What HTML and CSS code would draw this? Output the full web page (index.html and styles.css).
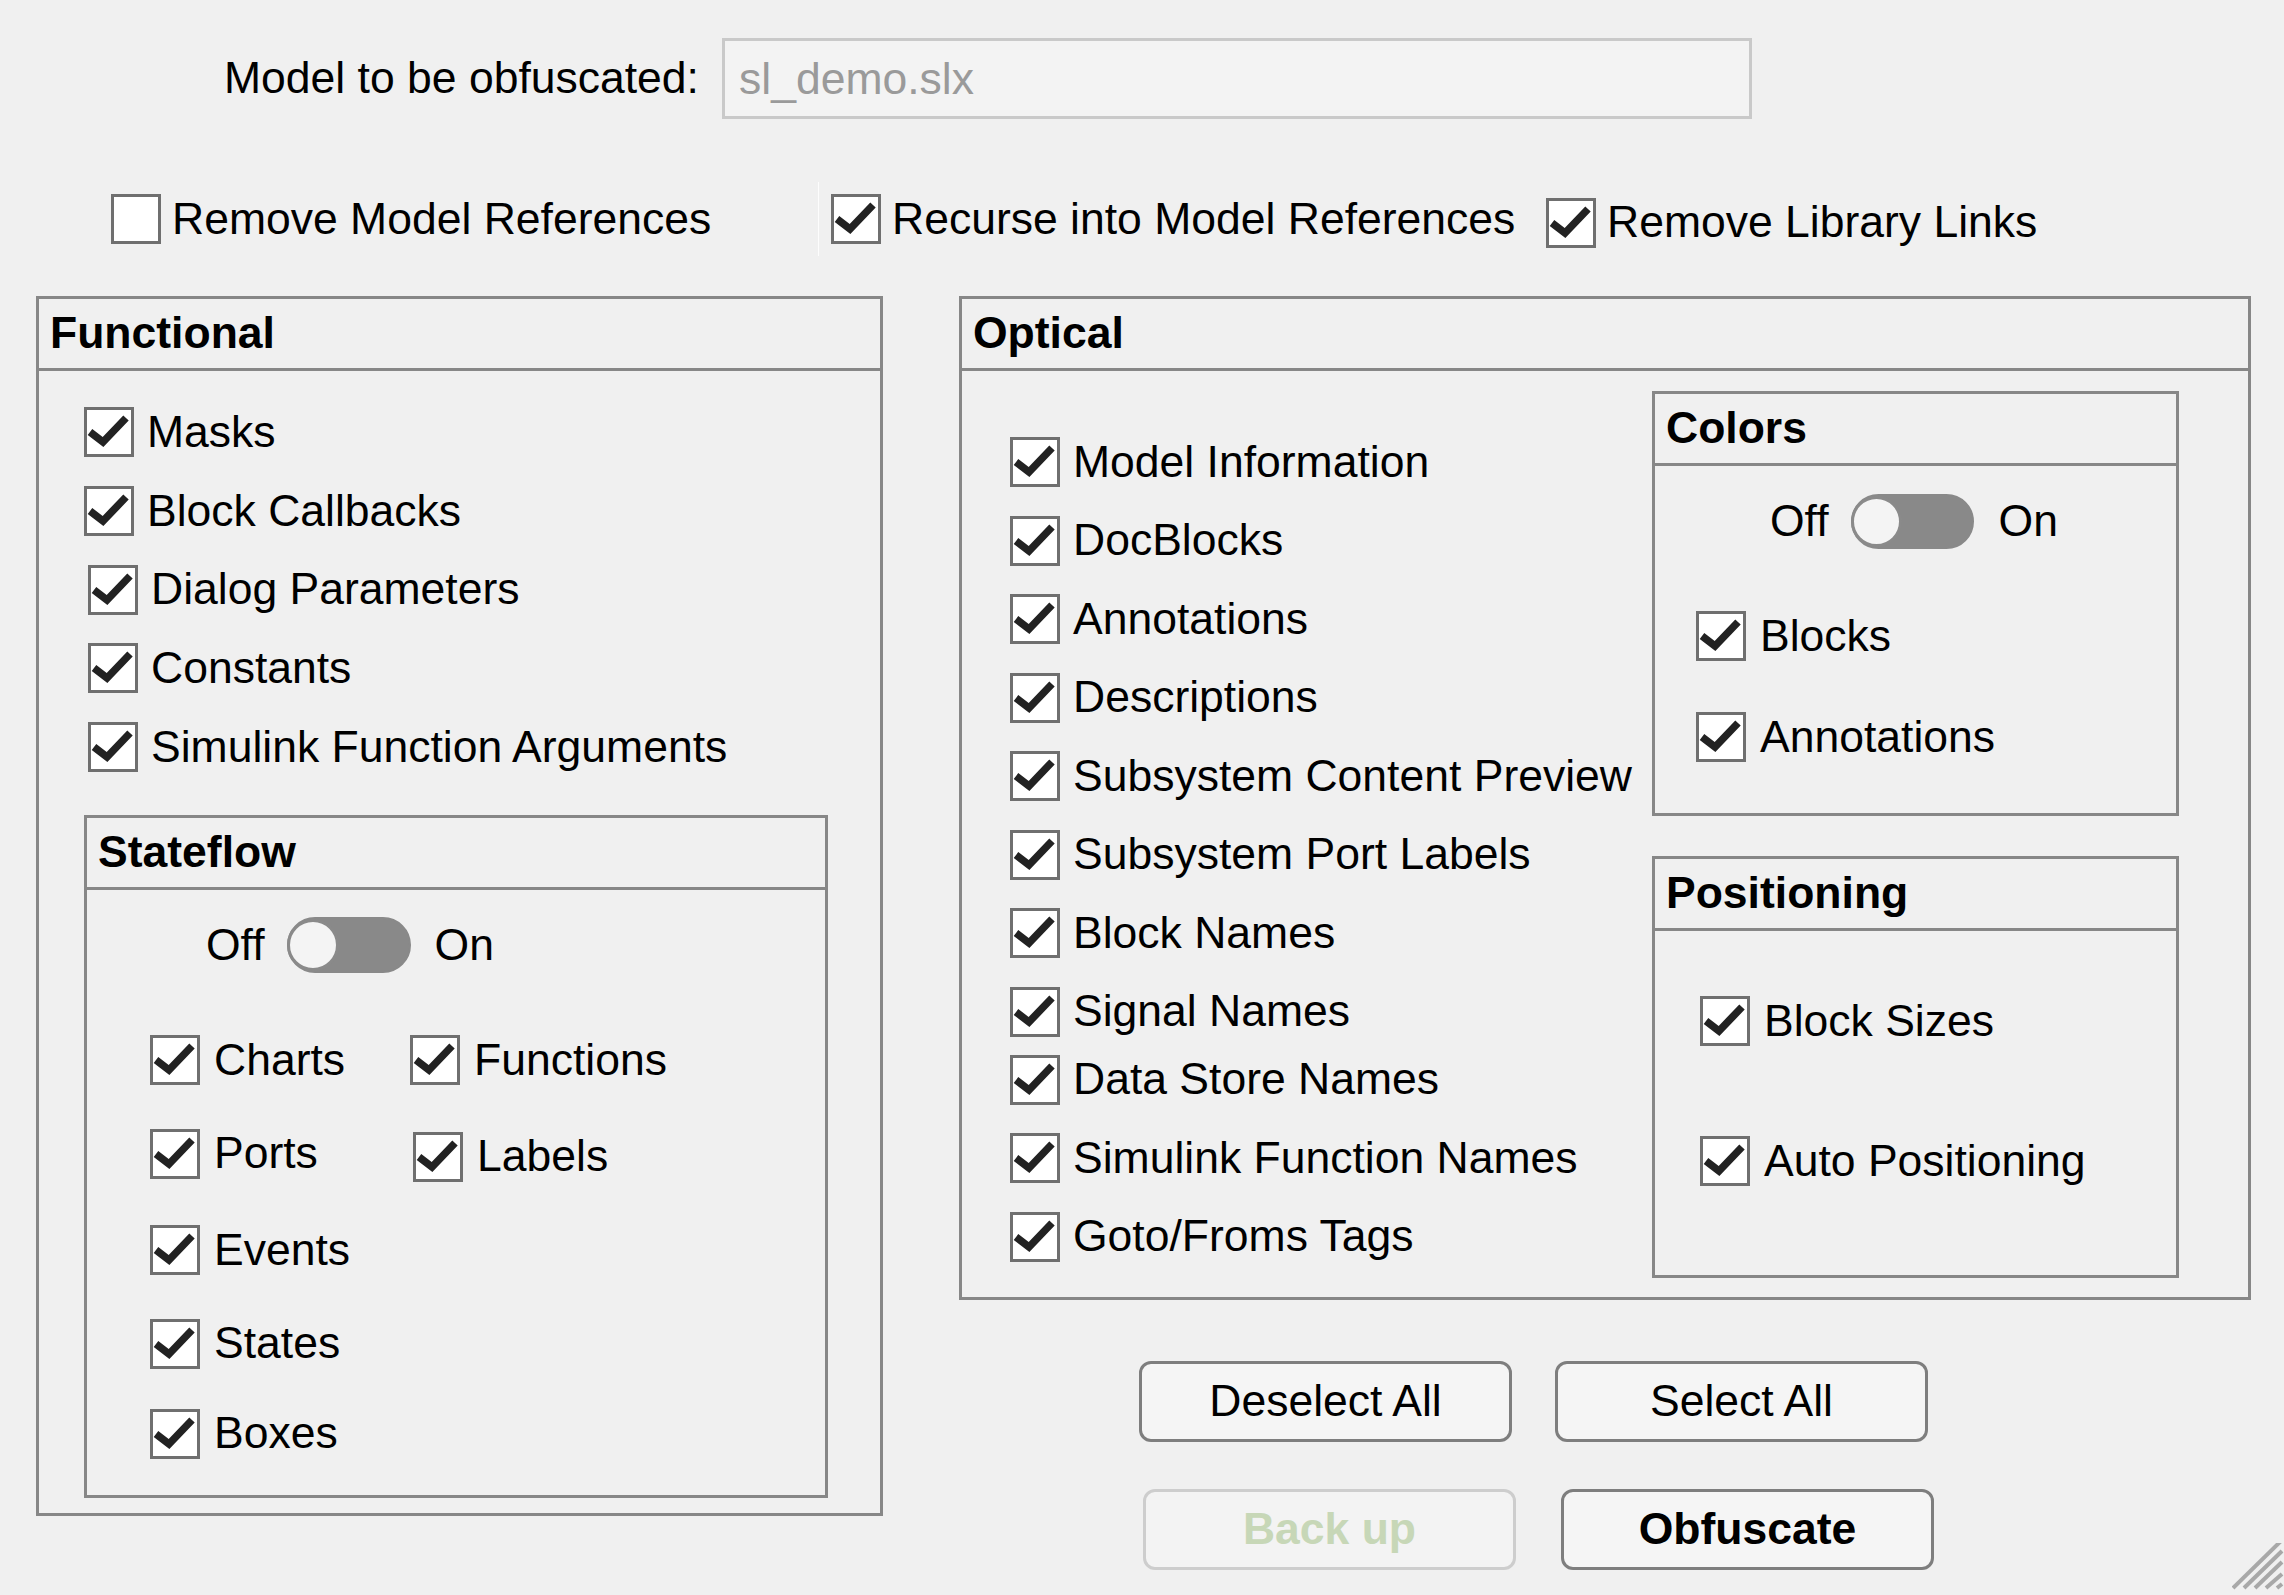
FILE: index.html
```html
<!DOCTYPE html>
<html lang="en">
<head>
<meta charset="utf-8">
<title>Model Obfuscator</title>
<link rel="stylesheet" href="styles.css">
</head>
<body>
<div class="app">
  <div class="model-row">
    <label class="model-label">Model to be obfuscated:</label>
    <div class="model-field">sl_demo.slx</div>
  </div>

  <div class="opt-row">
    <div class="cb opt1"><span class="box"></span><span class="lbl">Remove Model References</span></div>
    <div class="sep"></div>
    <div class="cb opt2"><span class="box"><svg class="tick" viewBox="0 0 44 44"><path d="M3 22 L16 32 L39 8"/></svg></span><span class="lbl">Recurse into Model References</span></div>
    <div class="cb opt3"><span class="box"><svg class="tick" viewBox="0 0 44 44"><path d="M3 22 L16 32 L39 8"/></svg></span><span class="lbl">Remove Library Links</span></div>
  </div>

  <div class="main">
    <section class="panel functional">
      <h2 class="panel-title">Functional</h2>
      <div class="panel-body func-body">
        <div class="cb-list func-list">
          <div class="cb"><span class="box"><svg class="tick" viewBox="0 0 44 44"><path d="M3 22 L16 32 L39 8"/></svg></span><span class="lbl">Masks</span></div>
          <div class="cb"><span class="box"><svg class="tick" viewBox="0 0 44 44"><path d="M3 22 L16 32 L39 8"/></svg></span><span class="lbl">Block Callbacks</span></div>
          <div class="cb shift"><span class="box"><svg class="tick" viewBox="0 0 44 44"><path d="M3 22 L16 32 L39 8"/></svg></span><span class="lbl">Dialog Parameters</span></div>
          <div class="cb shift"><span class="box"><svg class="tick" viewBox="0 0 44 44"><path d="M3 22 L16 32 L39 8"/></svg></span><span class="lbl">Constants</span></div>
          <div class="cb shift"><span class="box"><svg class="tick" viewBox="0 0 44 44"><path d="M3 22 L16 32 L39 8"/></svg></span><span class="lbl">Simulink Function Arguments</span></div>
        </div>

        <section class="panel stateflow">
          <h2 class="panel-title">Stateflow</h2>
          <div class="panel-body sf-body">
            <div class="toggle-row sf-toggle">
              <span class="tog-lbl">Off</span>
              <span class="switch"><span class="knob"></span></span>
              <span class="tog-lbl">On</span>
            </div>
            <div class="sf-grid">
              <div class="sf-row">
                <div class="cb sf-col1"><span class="box"><svg class="tick" viewBox="0 0 44 44"><path d="M3 22 L16 32 L39 8"/></svg></span><span class="lbl">Charts</span></div>
                <div class="cb"><span class="box"><svg class="tick" viewBox="0 0 44 44"><path d="M3 22 L16 32 L39 8"/></svg></span><span class="lbl">Functions</span></div>
              </div>
              <div class="sf-row">
                <div class="cb sf-col1"><span class="box"><svg class="tick" viewBox="0 0 44 44"><path d="M3 22 L16 32 L39 8"/></svg></span><span class="lbl">Ports</span></div>
                <div class="cb labels-cb"><span class="box"><svg class="tick" viewBox="0 0 44 44"><path d="M3 22 L16 32 L39 8"/></svg></span><span class="lbl">Labels</span></div>
              </div>
              <div class="sf-row">
                <div class="cb sf-col1"><span class="box"><svg class="tick" viewBox="0 0 44 44"><path d="M3 22 L16 32 L39 8"/></svg></span><span class="lbl">Events</span></div>
              </div>
              <div class="sf-row">
                <div class="cb sf-col1"><span class="box"><svg class="tick" viewBox="0 0 44 44"><path d="M3 22 L16 32 L39 8"/></svg></span><span class="lbl">States</span></div>
              </div>
              <div class="sf-row sf-last">
                <div class="cb sf-col1"><span class="box"><svg class="tick" viewBox="0 0 44 44"><path d="M3 22 L16 32 L39 8"/></svg></span><span class="lbl">Boxes</span></div>
              </div>
            </div>
          </div>
        </section>
      </div>
    </section>

    <div class="right-col">
      <section class="panel optical">
        <h2 class="panel-title">Optical</h2>
        <div class="panel-body opt-body">
          <div class="cb-list optical-list">
            <div class="cb"><span class="box"><svg class="tick" viewBox="0 0 44 44"><path d="M3 22 L16 32 L39 8"/></svg></span><span class="lbl">Model Information</span></div>
            <div class="cb"><span class="box"><svg class="tick" viewBox="0 0 44 44"><path d="M3 22 L16 32 L39 8"/></svg></span><span class="lbl">DocBlocks</span></div>
            <div class="cb"><span class="box"><svg class="tick" viewBox="0 0 44 44"><path d="M3 22 L16 32 L39 8"/></svg></span><span class="lbl">Annotations</span></div>
            <div class="cb"><span class="box"><svg class="tick" viewBox="0 0 44 44"><path d="M3 22 L16 32 L39 8"/></svg></span><span class="lbl">Descriptions</span></div>
            <div class="cb"><span class="box"><svg class="tick" viewBox="0 0 44 44"><path d="M3 22 L16 32 L39 8"/></svg></span><span class="lbl">Subsystem Content Preview</span></div>
            <div class="cb"><span class="box"><svg class="tick" viewBox="0 0 44 44"><path d="M3 22 L16 32 L39 8"/></svg></span><span class="lbl">Subsystem Port Labels</span></div>
            <div class="cb"><span class="box"><svg class="tick" viewBox="0 0 44 44"><path d="M3 22 L16 32 L39 8"/></svg></span><span class="lbl">Block Names</span></div>
            <div class="cb"><span class="box"><svg class="tick" viewBox="0 0 44 44"><path d="M3 22 L16 32 L39 8"/></svg></span><span class="lbl">Signal Names</span></div>
            <div class="cb tight"><span class="box"><svg class="tick" viewBox="0 0 44 44"><path d="M3 22 L16 32 L39 8"/></svg></span><span class="lbl">Data Store Names</span></div>
            <div class="cb"><span class="box"><svg class="tick" viewBox="0 0 44 44"><path d="M3 22 L16 32 L39 8"/></svg></span><span class="lbl">Simulink Function Names</span></div>
            <div class="cb"><span class="box"><svg class="tick" viewBox="0 0 44 44"><path d="M3 22 L16 32 L39 8"/></svg></span><span class="lbl">Goto/Froms Tags</span></div>
          </div>

          <div class="sub-col">
            <section class="panel colors">
              <h2 class="panel-title">Colors</h2>
              <div class="panel-body colors-body">
                <div class="toggle-row col-toggle">
                  <span class="tog-lbl">Off</span>
                  <span class="switch"><span class="knob"></span></span>
                  <span class="tog-lbl">On</span>
                </div>
                <div class="cb colors-cb1"><span class="box"><svg class="tick" viewBox="0 0 44 44"><path d="M3 22 L16 32 L39 8"/></svg></span><span class="lbl">Blocks</span></div>
                <div class="cb colors-cb2"><span class="box"><svg class="tick" viewBox="0 0 44 44"><path d="M3 22 L16 32 L39 8"/></svg></span><span class="lbl">Annotations</span></div>
              </div>
            </section>

            <section class="panel positioning">
              <h2 class="panel-title">Positioning</h2>
              <div class="panel-body pos-body">
                <div class="cb pos-cb1"><span class="box"><svg class="tick" viewBox="0 0 44 44"><path d="M3 22 L16 32 L39 8"/></svg></span><span class="lbl">Block Sizes</span></div>
                <div class="cb pos-cb2"><span class="box"><svg class="tick" viewBox="0 0 44 44"><path d="M3 22 L16 32 L39 8"/></svg></span><span class="lbl">Auto Positioning</span></div>
              </div>
            </section>
          </div>
        </div>
      </section>

      <div class="buttons">
        <div class="btn-row">
          <button class="btn">Deselect All</button>
          <button class="btn">Select All</button>
        </div>
        <div class="btn-row btn-row2">
          <button class="btn btn-bold btn-disabled" disabled>Back up</button>
          <button class="btn btn-bold btn-primary">Obfuscate</button>
        </div>
      </div>
    </div>
  </div>
</div>

<svg class="grip" viewBox="0 0 52 52" width="52" height="52">
  <line x1="1" y1="45" x2="50" y2="-3"/>
  <line x1="12" y1="45" x2="50" y2="8"/>
  <line x1="23" y1="45" x2="50" y2="19"/>
  <line x1="34" y1="45" x2="50" y2="31"/>
  <line x1="45" y1="45" x2="50" y2="41"/>
</svg>
</body>
</html>
```

FILE: styles.css
```css
html, body {
  margin: 0;
  padding: 0;
  height: 100%;
}

body {
  position: relative;
  background: #f0f0f0;
  font-family: "Liberation Sans", Arial, sans-serif;
  font-size: 44.5px;
  color: #000;
  overflow: hidden;
}

.app {
  width: 2284px;
  padding-top: 38px;
  box-sizing: border-box;
}

/* ---------- model row ---------- */
.model-row {
  display: flex;
  align-items: center;
  gap: 23px;
}

.model-label {
  width: 699px;
  text-align: right;
  line-height: 1;
}

.model-field {
  width: 1030px;
  height: 81px;
  box-sizing: border-box;
  border: 3px solid #c9c9c9;
  background: #f3f3f3;
  color: #9a9a9a;
  display: flex;
  align-items: center;
  padding-left: 14px;
}

/* ---------- checkbox ---------- */
.cb {
  display: flex;
  align-items: center;
  gap: 14px;
  white-space: nowrap;
}

.box {
  width: 50px;
  height: 50px;
  box-sizing: border-box;
  border: 3px solid #6f6f6f;
  background: #fff;
  flex: none;
  display: block;
}

.tick {
  display: block;
  width: 44px;
  height: 44px;
}

.tick path {
  fill: none;
  stroke: #222;
  stroke-width: 7.5;
  stroke-linejoin: miter;
  stroke-linecap: butt;
}

.lbl {
  line-height: 1;
}

/* ---------- option row ---------- */
.opt-row {
  display: flex;
  align-items: center;
  height: 74px;
  margin-top: 63px;
  padding-left: 111px;
}

.opt-row .cb {
  gap: 11px;
}

.opt1 {
  width: 707px;
}

.sep {
  width: 1px;
  height: 74px;
  background: #fdfdfd;
}

.opt2 {
  margin-left: 12px;
  width: 715px;
}

.opt-row .opt3 {
  margin-top: 7px;
  gap: 11px;
}

/* ---------- main layout ---------- */
.main {
  display: flex;
  align-items: flex-start;
  gap: 76px;
  margin-top: 40px;
  padding-left: 36px;
}

.panel {
  border: 3px solid #878787;
  box-sizing: border-box;
  display: flex;
  flex-direction: column;
}

.panel-title {
  margin: 0;
  height: 72px;
  box-sizing: border-box;
  border-bottom: 3px solid #878787;
  font-size: 44.5px;
  font-weight: bold;
  display: flex;
  align-items: center;
  padding-left: 11px;
  line-height: 1;
}

.panel-body {
  flex: 1;
}

/* functional */
.functional {
  width: 847px;
  height: 1220px;
}

.func-body {
  padding-top: 36px;
  padding-left: 45px;
}

.cb-list {
  display: flex;
  flex-direction: column;
}

.func-list {
  gap: 28.75px;
}

.func-list .cb {
  gap: 13px;
}

.func-list .shift {
  margin-left: 4px;
}

.stateflow {
  width: 744px;
  height: 683px;
  margin-top: 43px;
}

.sf-body {
  padding-top: 27px;
  padding-left: 63px;
}

/* toggle */
.toggle-row {
  display: flex;
  align-items: center;
  height: 56px;
}

.tog-lbl {
  line-height: 1;
}

.switch {
  width: 124px;
  height: 56px;
  box-sizing: border-box;
  border-radius: 28px;
  background: #898989;
  border: 2px solid #898989;
  display: flex;
  align-items: center;
  margin: 0 24px 0 22px;
}

.knob {
  width: 52px;
  height: 52px;
  box-sizing: border-box;
  border-radius: 50%;
  background: #f4f4f4;
  border: 3px solid #8a8a8a;
  margin-left: -2px;
}

.sf-toggle {
  margin-left: 56px;
}

.sf-grid {
  display: flex;
  flex-direction: column;
  gap: 43.5px;
  margin-top: 62px;
}

.sf-row {
  display: flex;
  align-items: flex-start;
}

.sf-last {
  margin-top: -3.5px;
}

.sf-col1 {
  width: 260px;
}

.labels-cb {
  margin-left: 3px;
  margin-top: 3px;
}

/* optical */
.right-col {
  display: flex;
  flex-direction: column;
}

.optical {
  width: 1292px;
  height: 1004px;
}

.opt-body {
  display: flex;
  align-items: flex-start;
}

.optical-list {
  width: 690px;
  box-sizing: border-box;
  padding-left: 48px;
  padding-top: 66px;
  gap: 28.5px;
  flex: none;
}

.optical-list .cb {
  gap: 13px;
}

.optical-list .tight {
  margin-top: -10.5px;
}

.sub-col {
  display: flex;
  flex-direction: column;
  gap: 40px;
  padding-top: 20px;
}

.colors {
  width: 527px;
  height: 425px;
}

.colors-body {
  padding-top: 28px;
  padding-left: 41px;
}

.col-toggle {
  margin-left: 74px;
  height: 55px;
}

.col-toggle .switch {
  width: 123px;
  height: 55px;
  margin: 0 25px 0 22px;
}

.col-toggle .knob {
  width: 51px;
  height: 51px;
}

.colors-cb1 {
  margin-top: 62px;
}

.colors-cb2 {
  margin-top: 51px;
}

.positioning {
  width: 527px;
  height: 422px;
}

.pos-body {
  padding-top: 65px;
  padding-left: 45px;
}

.pos-cb2 {
  margin-top: 90px;
}

/* buttons */
.buttons {
  display: flex;
  flex-direction: column;
  gap: 47px;
  margin-top: 61px;
  padding-left: 180px;
}

.btn-row {
  display: flex;
  gap: 43px;
}

.btn-row2 {
  margin-left: 4px;
  gap: 45px;
}

.btn {
  width: 373px;
  height: 81px;
  box-sizing: border-box;
  border: 3px solid #7e7e7e;
  border-radius: 12px;
  background: #f5f5f5;
  font-family: "Liberation Sans", Arial, sans-serif;
  font-size: 44.5px;
  color: #000;
  padding: 0;
  line-height: 1;
}

.btn-bold {
  font-weight: bold;
}

.btn-disabled {
  border-color: #cdcdcd;
  color: #c7d7b7;
  background: #f3f3f3;
}

/* resize grip */
.grip {
  position: absolute;
  left: 2232px;
  top: 1543px;
  overflow: hidden;
}

.grip line {
  stroke: #a8a8a8;
  stroke-width: 4;
}
```
